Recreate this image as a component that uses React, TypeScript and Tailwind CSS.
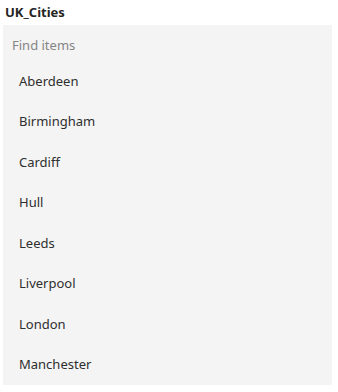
const cities = [
  "Aberdeen",
  "Birmingham",
  "Cardiff",
  "Hull",
  "Leeds",
  "Liverpool",
  "London",
  "Manchester",
];

export default function App() {
  return (
    <div className="w-[338px] h-[392px] bg-white font-['Noto_Sans',sans-serif]">
      {/* Title */}
      <div className="h-[25px] pl-[5px] text-[13px] leading-[25px] font-bold text-[#252525]">
        UK_Cities
      </div>

      {/* List panel */}
      <div className="ml-[3px] w-[329px] bg-[#f4f4f4]">
        <div className="h-[36px] pt-[10px] pl-[9px] text-[13px] leading-[20px] text-[#858585]">
          Find items
        </div>
        <ul>
          {cities.map((city) => (
            <li
              key={city}
              className="h-[40.5px] flex items-center pl-[16px] text-[13px] text-[#2e2e2e]"
            >
              {city}
            </li>
          ))}
        </ul>
      </div>
    </div>
  );
}
